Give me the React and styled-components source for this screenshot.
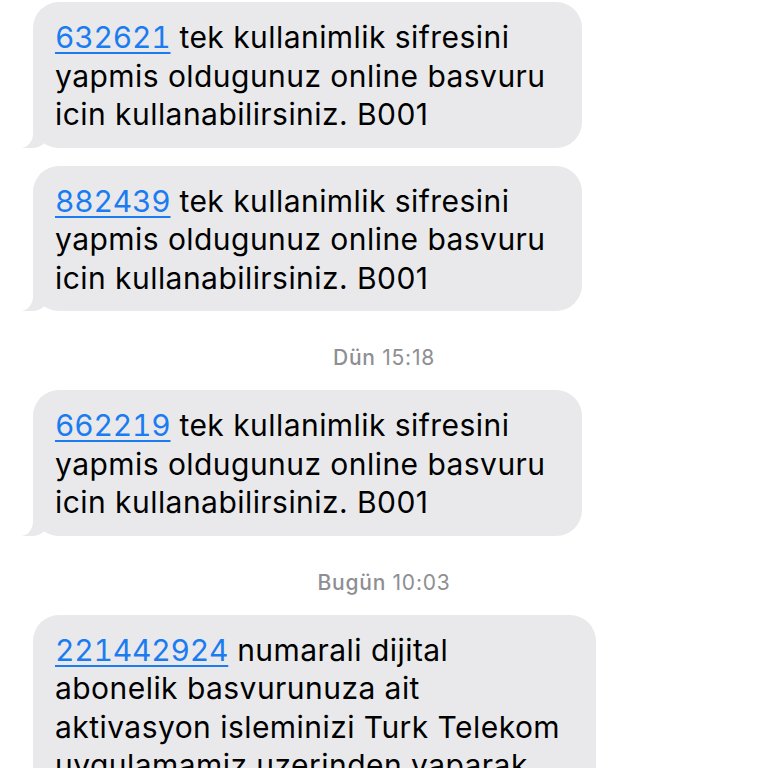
import React from "react";
import styled, { createGlobalStyle } from "styled-components";

const GlobalStyle = createGlobalStyle`
  html, body {
    margin: 0;
    padding: 0;
    background: #ffffff;
    height: 768px;
    overflow: hidden;
  }
  body {
    font-family: Inter, "Liberation Sans", sans-serif;
  }
`;

const otp = [" tek kullanimlik sifresini", "yapmis oldugunuz online basvuru", "icin kullanabilirsiniz. B001"];

const messages = [
  { type: "msg", code: "632621", lines: otp, width: 549 },
  { type: "msg", code: "882439", lines: otp, width: 549 },
  { type: "time", label: "Dün", time: "15:18" },
  { type: "msg", code: "662219", lines: otp, width: 549 },
  { type: "time", label: "Bugün", time: "10:03" },
  {
    type: "msg",
    code: "221442924",
    lines: [
      " numarali dijital",
      "abonelik basvurunuza ait",
      "aktivasyon isleminizi Turk Telekom",
      "uygulamamiz uzerinden yaparak",
    ],
    width: 563,
  },
];

const Thread = styled.div`
  display: flex;
  flex-direction: column;
  align-items: flex-start;
  padding: 2px 0 0 33px;
`;

const Bubble = styled.div`
  position: relative;
  box-sizing: border-box;
  width: ${(p) => p.$width}px;
  background: #e9e9eb;
  border-radius: 26px;
  padding: 16px 22px 14px;
  margin-bottom: 18px;
  color: #000;
  font-size: 30px;
  line-height: 38.5px;
  letter-spacing: 0.45px;

  &::before {
    content: "";
    position: absolute;
    bottom: 0;
    left: -11px;
    width: 26px;
    height: 24px;
    background: #e9e9eb;
    border-bottom-right-radius: 16px 14px;
  }
  &::after {
    content: "";
    position: absolute;
    bottom: 0;
    left: -20px;
    width: 20px;
    height: 26px;
    background: #ffffff;
    border-bottom-right-radius: 12px 15px;
  }
`;

const Line = styled.span`
  display: block;
  white-space: nowrap;
  position: relative;
  z-index: 1;
`;

const Code = styled.span`
  color: #1b7cf2;
  text-decoration: underline;
  text-decoration-thickness: 2px;
  text-underline-offset: 4px;
  font-variant-numeric: tabular-nums;
  letter-spacing: -0.2px;
`;

const Stamp = styled.div`
  align-self: stretch;
  margin: 18px 0 21px -33px;
  text-align: center;
  font-size: 21px;
  line-height: 22px;
  color: #8e8e93;
  font-weight: 500;
  letter-spacing: 0.8px;
`;

const Time = styled.span`
  font-weight: 400;
`;

export default function App() {
  return (
    <>
      <GlobalStyle />
      <Thread>
        {messages.map((m, i) =>
          m.type === "time" ? (
            <Stamp key={i}>
              {m.label} <Time>{m.time}</Time>
            </Stamp>
          ) : (
            <Bubble key={i} $width={m.width}>
              {m.lines.map((l, j) => (
                <Line key={j}>
                  {j === 0 && <Code>{m.code}</Code>}
                  {l}
                </Line>
              ))}
            </Bubble>
          )
        )}
      </Thread>
    </>
  );
}
